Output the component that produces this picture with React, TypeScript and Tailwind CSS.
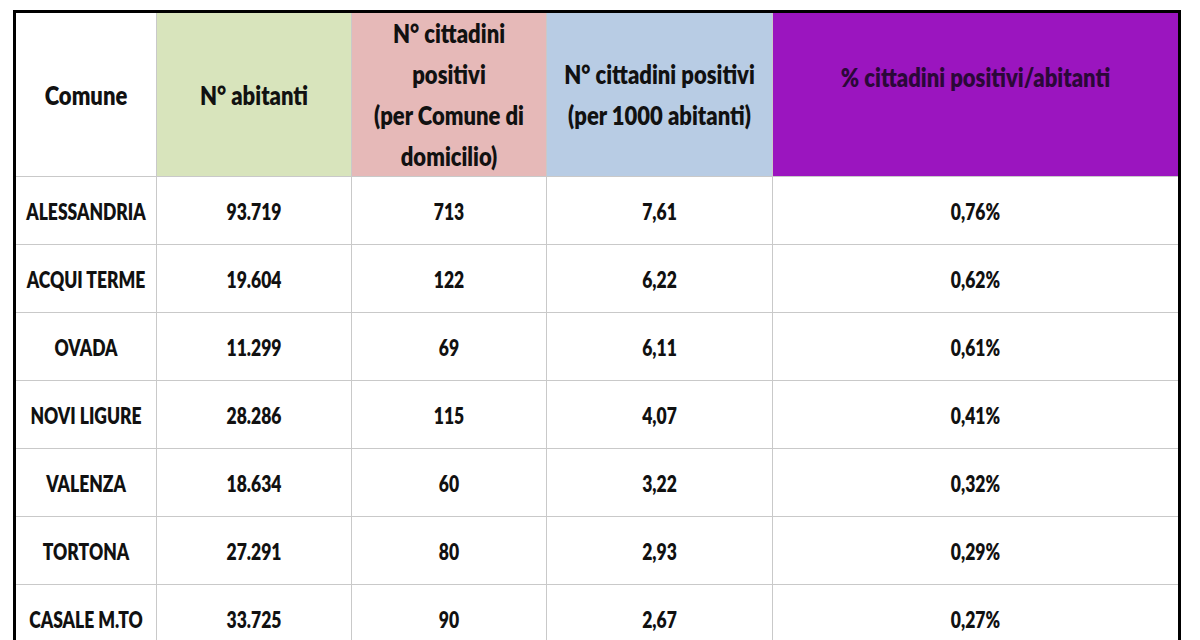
const rows = [
  ["ALESSANDRIA", "93.719", "713", "7,61", "0,76%"],
  ["ACQUI TERME", "19.604", "122", "6,22", "0,62%"],
  ["OVADA", "11.299", "69", "6,11", "0,61%"],
  ["NOVI LIGURE", "28.286", "115", "4,07", "0,41%"],
  ["VALENZA", "18.634", "60", "3,22", "0,32%"],
  ["TORTONA", "27.291", "80", "2,93", "0,29%"],
  ["CASALE M.TO", "33.725", "90", "2,67", "0,27%"],
];

const cols = "grid grid-cols-[141px_195px_195px_226px_405px]";

function Head({ className, children }: { className: string; children: React.ReactNode }) {
  return (
    <div className={`flex justify-center border-r border-b border-[#c9c9c9] last:border-r-0 ${className}`}>
      <div className="scale-y-[1.2] text-center text-[22px] leading-[34px] font-extrabold">{children}</div>
    </div>
  );
}

export default function App() {
  return (
    <div className="h-[640px] w-[1200px] overflow-hidden bg-white font-['Lato',sans-serif] text-[#111]">
      <div className="mt-[10px] ml-[13px] w-[1168px] border-[3px] border-b-0 border-black">
        <div className={`${cols} h-[164px]`}>
          <Head className="items-center bg-white">Comune</Head>
          <Head className="items-center bg-[#d8e4bc]">N° abitanti</Head>
          <Head className="items-center bg-[#e6b9b8]">
            N° cittadini
            <br />
            positivi
            <br />
            (per Comune di
            <br />
            domicilio)
          </Head>
          <Head className="items-center bg-[#b8cce4]">
            N° cittadini positivi
            <br />
            (per 1000 abitanti)
          </Head>
          <Head className="items-start bg-[#9b15bf] pt-[47px] text-[#2b0838]">% cittadini positivi/abitanti</Head>
        </div>
        {rows.map((row) => (
          <div key={row[0]} className={`${cols} h-[68px]`}>
            {row.map((cell, i) => (
              <div
                key={i}
                className="flex items-center justify-center border-r border-b border-[#c9c9c9] pt-[5px] last:border-r-0"
              >
                <span className="scale-y-[1.25] text-[17.5px] font-extrabold">{cell}</span>
              </div>
            ))}
          </div>
        ))}
      </div>
    </div>
  );
}
